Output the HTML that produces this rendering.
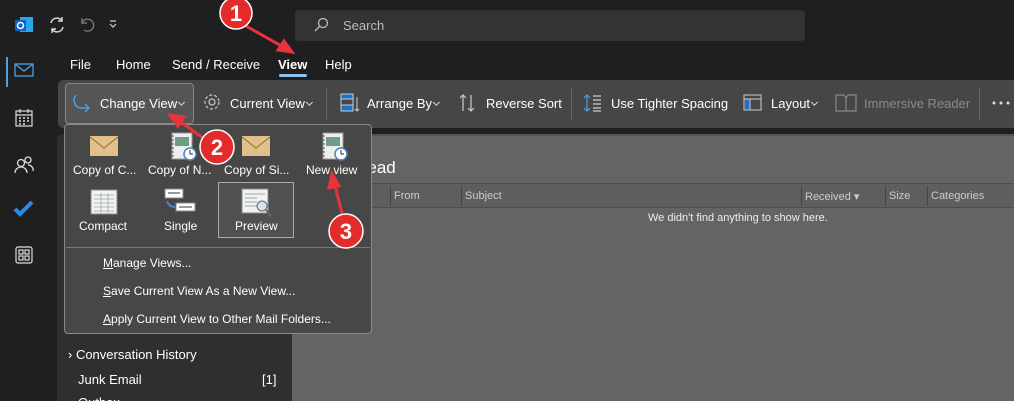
<!DOCTYPE html>
<html><head><meta charset="utf-8"><style>
*{margin:0;padding:0;box-sizing:border-box}
html,body{width:1014px;height:401px;overflow:hidden}
body{background:#1f1f1f;font-family:"Liberation Sans",sans-serif;color:#fff;position:relative;font-size:13px}
.a{position:absolute;white-space:nowrap}
.cv{display:inline-block;width:7px;height:4px;margin-left:4px;vertical-align:middle;border-left:1.2px solid #ddd;border-bottom:1.2px solid #ddd;transform:rotate(-45deg) translateY(-3px);width:5px;height:5px}
</style></head><body>
<div class="a" style="left:0;top:48px;width:47px;height:353px;background:#1f1f1f"></div>
<div class="a" style="left:6px;top:57px;width:2px;height:30px;background:#4aa0e6"></div>
<svg class="a" style="left:14px;top:15px" width="20" height="20"><rect x="6" y="2" width="13" height="15" fill="#28a8ea"/><rect x="1" y="5" width="11" height="11" fill="#0a64c8"/><circle cx="6.5" cy="10.5" r="3" fill="none" stroke="#fff" stroke-width="1.5"/></svg>
<svg class="a" style="left:47px;top:15px" width="20" height="20" fill="none" stroke="#ddd" stroke-width="1.4"><path d="M4 8a6 6 0 0 1 11-2M16 12a6 6 0 0 1-11 2"/><path d="M15 2v4h-4M5 18v-4h4"/></svg>
<svg class="a" style="left:78px;top:15px" width="18" height="18" fill="none" stroke="#777" stroke-width="1.4"><path d="M4 3v5h5M4 8a6 6 0 1 1 2 7"/></svg>
<svg class="a" style="left:109px;top:20px" width="8" height="8" fill="none" stroke="#ccc" stroke-width="1.2"><path d="M1 1h6M1 4l3 3 3-3"/></svg>
<svg class="a" style="left:14px;top:62px" width="20" height="16" fill="none" stroke="#4aa0e6" stroke-width="1.3"><rect x="1" y="2" width="18" height="12"/><path d="M1 2l9 7 9-7"/></svg>
<svg class="a" style="left:14px;top:108px" width="20" height="20" fill="none" stroke="#ddd" stroke-width="1.2"><rect x="2" y="3" width="16" height="15"/><path d="M2 7h16M6 1v4M14 1v4"/><path d="M5 10h2M9 10h2M13 10h2M5 13h2M9 13h2M13 13h2M5 16h2M9 16h2" stroke-width="1.5"/></svg>
<svg class="a" style="left:13px;top:155px" width="22" height="20" fill="none" stroke="#ddd" stroke-width="1.3"><circle cx="8" cy="8" r="3.5"/><path d="M2 18a6 6 0 0 1 12 0"/><circle cx="15" cy="5" r="3"/><path d="M15 10a5 5 0 0 1 5 6"/></svg>
<svg class="a" style="left:13px;top:200px" width="22" height="18"><path d="M2 9l5 5L19 2" fill="none" stroke="#2b8be6" stroke-width="4"/></svg>
<svg class="a" style="left:15px;top:246px" width="18" height="18" fill="none" stroke="#ddd" stroke-width="1.2"><rect x="1" y="1" width="16" height="16" rx="2"/><rect x="4" y="4" width="4" height="4"/><rect x="10" y="4" width="4" height="4"/><rect x="4" y="10" width="4" height="4"/><rect x="10" y="10" width="4" height="4"/></svg>
<div class="a" style="left:295px;top:10px;width:510px;height:31px;background:#333;border-radius:4px"></div>
<svg class="a" style="left:313px;top:17px" width="16" height="16" fill="none" stroke="#bbb" stroke-width="1.3"><circle cx="10" cy="6" r="4.5"/><path d="M7 9l-5 5"/></svg>
<div class="a" style="left:343px;top:18px;color:#bbb;font-size:13px">Search</div>
<div class="a" style="left:70px;top:57px">File</div>
<div class="a" style="left:116px;top:57px">Home</div>
<div class="a" style="left:172px;top:57px">Send / Receive</div>
<div class="a" style="left:278px;top:57px;font-weight:bold">View</div>
<div class="a" style="left:279px;top:74px;width:28px;height:3px;background:#8cc3f0;border-radius:2px"></div>
<div class="a" style="left:325px;top:57px">Help</div>
<div class="a" style="left:58px;top:80px;width:956px;height:48px;background:#464646;border-radius:6px 0 0 6px"></div>
<div class="a" style="left:65px;top:83px;width:129px;height:41px;border:1px solid #888;border-radius:4px;background:#555"></div>
<svg class="a" style="left:72px;top:93px" width="20" height="20" fill="none" stroke="#4aa0e6" stroke-width="1.4"><path d="M4 2a8 8 0 0 0 4 13h9M13 11l4 4-4 4"/></svg>
<div class="a" style="left:100px;top:96px">Change View<span class="cv"></span></div>
<svg class="a" style="left:203px;top:93px" width="18" height="18" fill="none" stroke="#ccc" stroke-width="1.2"><circle cx="9" cy="9" r="3"/><circle cx="9" cy="9" r="7" stroke-dasharray="3 2"/></svg>
<div class="a" style="left:230px;top:96px">Current View<span class="cv"></span></div>
<div class="a" style="left:326px;top:88px;width:1px;height:32px;background:#666"></div>
<svg class="a" style="left:340px;top:93px" width="20" height="20"><rect x="1" y="1" width="12" height="5" fill="#1a73c9" stroke="#ccc"/><rect x="1" y="6" width="12" height="6" fill="none" stroke="#ccc"/><rect x="1" y="12" width="12" height="6" fill="#1a73c9" stroke="#ccc"/><path d="M17 4v14M15 16l2 2 2-2" stroke="#ccc" fill="none"/></svg>
<div class="a" style="left:367px;top:96px">Arrange By<span class="cv"></span></div>
<svg class="a" style="left:458px;top:93px" width="18" height="20" fill="none" stroke="#ccc" stroke-width="1.2"><path d="M5 18V2M2 5l3-3 3 3M13 2v16M10 15l3 3 3-3"/></svg>
<div class="a" style="left:486px;top:96px">Reverse Sort</div>
<div class="a" style="left:571px;top:88px;width:1px;height:32px;background:#666"></div>
<svg class="a" style="left:583px;top:93px" width="20" height="20" fill="none" stroke-width="1.2"><path d="M4 2v16M1 5l3-3 3 3M1 15l3 3 3-3" stroke="#4aa0e6"/><path d="M10 3h8M10 7h8M10 11h8M10 15h8M10 18h8" stroke="#ccc"/></svg>
<div class="a" style="left:611px;top:96px">Use Tighter Spacing</div>
<svg class="a" style="left:743px;top:94px" width="20" height="18"><rect x="1" y="1" width="17" height="15" fill="none" stroke="#ccc"/><rect x="2" y="5" width="5" height="10" fill="#1a73c9"/><path d="M1 5h17M7 5v11" stroke="#ccc"/></svg>
<div class="a" style="left:771px;top:96px">Layout<span class="cv"></span></div>
<svg class="a" style="left:835px;top:93px" width="22" height="20" fill="none" stroke="#888" stroke-width="1.2"><path d="M1 2h8l2 3v13H1zM11 5l2-3h8v16H11"/></svg>
<div class="a" style="left:864px;top:96px;color:#8a8a8a">Immersive Reader</div>
<div class="a" style="left:979px;top:88px;width:1px;height:32px;background:#666"></div>
<svg class="a" style="left:992px;top:101px" width="20" height="4" fill="#ddd"><circle cx="2" cy="2" r="1.5"/><circle cx="9" cy="2" r="1.5"/><circle cx="16" cy="2" r="1.5"/></svg>
<div class="a" style="left:57px;top:134px;width:235px;height:267px;background:#2f2f2f;border-radius:6px 0 0 0"></div>
<div class="a" style="left:68px;top:347px">› Conversation History</div>
<div class="a" style="left:78px;top:372px">Junk Email</div>
<div class="a" style="left:262px;top:372px">[1]</div>
<div class="a" style="left:78px;top:395px">Outbox</div>
<div class="a" style="left:292px;top:134px;width:722px;height:267px;background:#646464"></div>
<div class="a" style="left:292px;top:134px;width:722px;height:2px;background:#555"></div>
<div class="a" style="left:340px;top:158px;font-size:17px">Unread</div>
<div class="a" style="left:292px;top:183px;width:722px;height:25px;background:#5e5e5e;border-top:1px solid #4d4d4d;border-bottom:1px solid #4d4d4d"></div>
<div class="a" style="left:390px;top:186px;width:1px;height:20px;background:#444"></div>
<div class="a" style="left:394px;top:190px;font-size:11px;color:#ccc">From</div>
<div class="a" style="left:461px;top:186px;width:1px;height:20px;background:#444"></div>
<div class="a" style="left:465px;top:190px;font-size:11px;color:#ccc">Subject</div>
<div class="a" style="left:801px;top:186px;width:1px;height:20px;background:#444"></div>
<div class="a" style="left:805px;top:190px;font-size:11px;color:#ccc">Received ▾</div>
<div class="a" style="left:885px;top:186px;width:1px;height:20px;background:#444"></div>
<div class="a" style="left:889px;top:190px;font-size:11px;color:#ccc">Size</div>
<div class="a" style="left:927px;top:186px;width:1px;height:20px;background:#444"></div>
<div class="a" style="left:931px;top:190px;font-size:11px;color:#ccc">Categories</div>
<div class="a" style="left:648px;top:212px;font-size:11px;color:#eee">We didn't find anything to show here.</div>
<div class="a" style="left:64px;top:124px;width:308px;height:210px;background:#474747;border:1px solid #8a8a8a;border-radius:4px"></div>
<svg class="a" style="left:89px;top:134px" width="30" height="24"><rect x="1" y="2" width="28" height="20" fill="#e2c08a"/><path d="M1 3l14 11 14-11" fill="none" stroke="#8d6c3a"/></svg>
<svg class="a" style="left:169px;top:132px" width="28" height="30"><rect x="3" y="1" width="20" height="26" fill="#eee" stroke="#999"/><rect x="6" y="5" width="14" height="9" fill="#6f9c86"/><path d="M2 4h3M2 8h3M2 12h3M2 16h3M2 20h3M2 24h3" stroke="#555"/><circle cx="21" cy="22" r="6" fill="#fff" stroke="#4a84c4" stroke-width="1.5"/><path d="M21 18v4h3" stroke="#333" fill="none"/></svg>
<svg class="a" style="left:241px;top:134px" width="30" height="24"><rect x="1" y="2" width="28" height="20" fill="#e2c08a"/><path d="M1 3l14 11 14-11" fill="none" stroke="#8d6c3a"/></svg>
<svg class="a" style="left:320px;top:132px" width="28" height="30"><rect x="3" y="1" width="20" height="26" fill="#eee" stroke="#999"/><rect x="6" y="5" width="14" height="9" fill="#6f9c86"/><path d="M2 4h3M2 8h3M2 12h3M2 16h3M2 20h3M2 24h3" stroke="#555"/><circle cx="21" cy="22" r="6" fill="#fff" stroke="#4a84c4" stroke-width="1.5"/><path d="M21 18v4h3" stroke="#333" fill="none"/></svg>
<div class="a" style="left:73px;top:163px;font-size:12px">Copy of C...</div>
<div class="a" style="left:148px;top:163px;font-size:12px">Copy of N...</div>
<div class="a" style="left:224px;top:163px;font-size:12px">Copy of Si...</div>
<div class="a" style="left:306px;top:163px;font-size:12px">New view</div>
<div class="a" style="left:218px;top:182px;width:76px;height:56px;border:1px solid #aaa;background:#505050"></div>
<svg class="a" style="left:90px;top:189px" width="28" height="26"><rect x="1" y="1" width="26" height="24" fill="#f2f2f2" stroke="#888"/><path d="M4 6h20M4 10h20M4 14h20M4 18h20M4 22h20M11 4v20M18 4v20" stroke="#9aa" stroke-width=".8"/></svg>
<svg class="a" style="left:164px;top:188px" width="32" height="28"><rect x="1" y="1" width="18" height="9" fill="#fff" stroke="#888"/><path d="M4 5h12" stroke="#333"/><rect x="12" y="15" width="19" height="8" fill="#fff" stroke="#888"/><path d="M15 19h13" stroke="#333"/><path d="M3 13q2 6 8 6" fill="none" stroke="#4a84c4" stroke-width="2"/></svg>
<svg class="a" style="left:241px;top:188px" width="32" height="30"><rect x="1" y="1" width="26" height="24" fill="#f2f2f2" stroke="#888"/><path d="M4 6h20M4 10h12M4 14h12M4 18h12" stroke="#9aa"/><circle cx="21" cy="18" r="5" fill="#cfe3f5" stroke="#666"/><path d="M25 22l5 6" stroke="#666" stroke-width="2"/></svg>
<div class="a" style="left:79px;top:219px;font-size:12px">Compact</div>
<div class="a" style="left:164px;top:219px;font-size:12px">Single</div>
<div class="a" style="left:235px;top:219px;font-size:12px">Preview</div>
<div class="a" style="left:66px;top:247px;width:304px;height:1px;background:#777"></div>
<div class="a" style="left:103px;top:256px;font-size:12px"><u>M</u>anage Views...</div>
<div class="a" style="left:103px;top:284px;font-size:12px"><u>S</u>ave Current View As a New View...</div>
<div class="a" style="left:103px;top:312px;font-size:12px"><u>A</u>pply Current View to Other Mail Folders...</div>
<svg class="a" style="left:0;top:0" width="1014" height="401">
<g stroke="#e8333a" stroke-width="3" fill="#e8333a">
<path d="M246 26L285 48" fill="none"/><path d="M292 52l-14-2 6-9z"/>
<path d="M206 140L178 120" fill="none"/><path d="M170 115l14 2-6 9z"/>
<path d="M343 217L334 182" fill="none"/><path d="M332 174l7 12-10 2z"/>
</g>
<g fill="#e32b2b" stroke="#fff" stroke-width="1.5"><circle cx="236" cy="13" r="16"/><circle cx="217" cy="147" r="17"/><circle cx="346" cy="231" r="17"/></g>
<g fill="#fff" font-family="Liberation Sans" font-weight="bold" font-size="22" text-anchor="middle"><text x="236" y="21">1</text><text x="217" y="155">2</text><text x="346" y="239">3</text></g>
</svg>
</body></html>
